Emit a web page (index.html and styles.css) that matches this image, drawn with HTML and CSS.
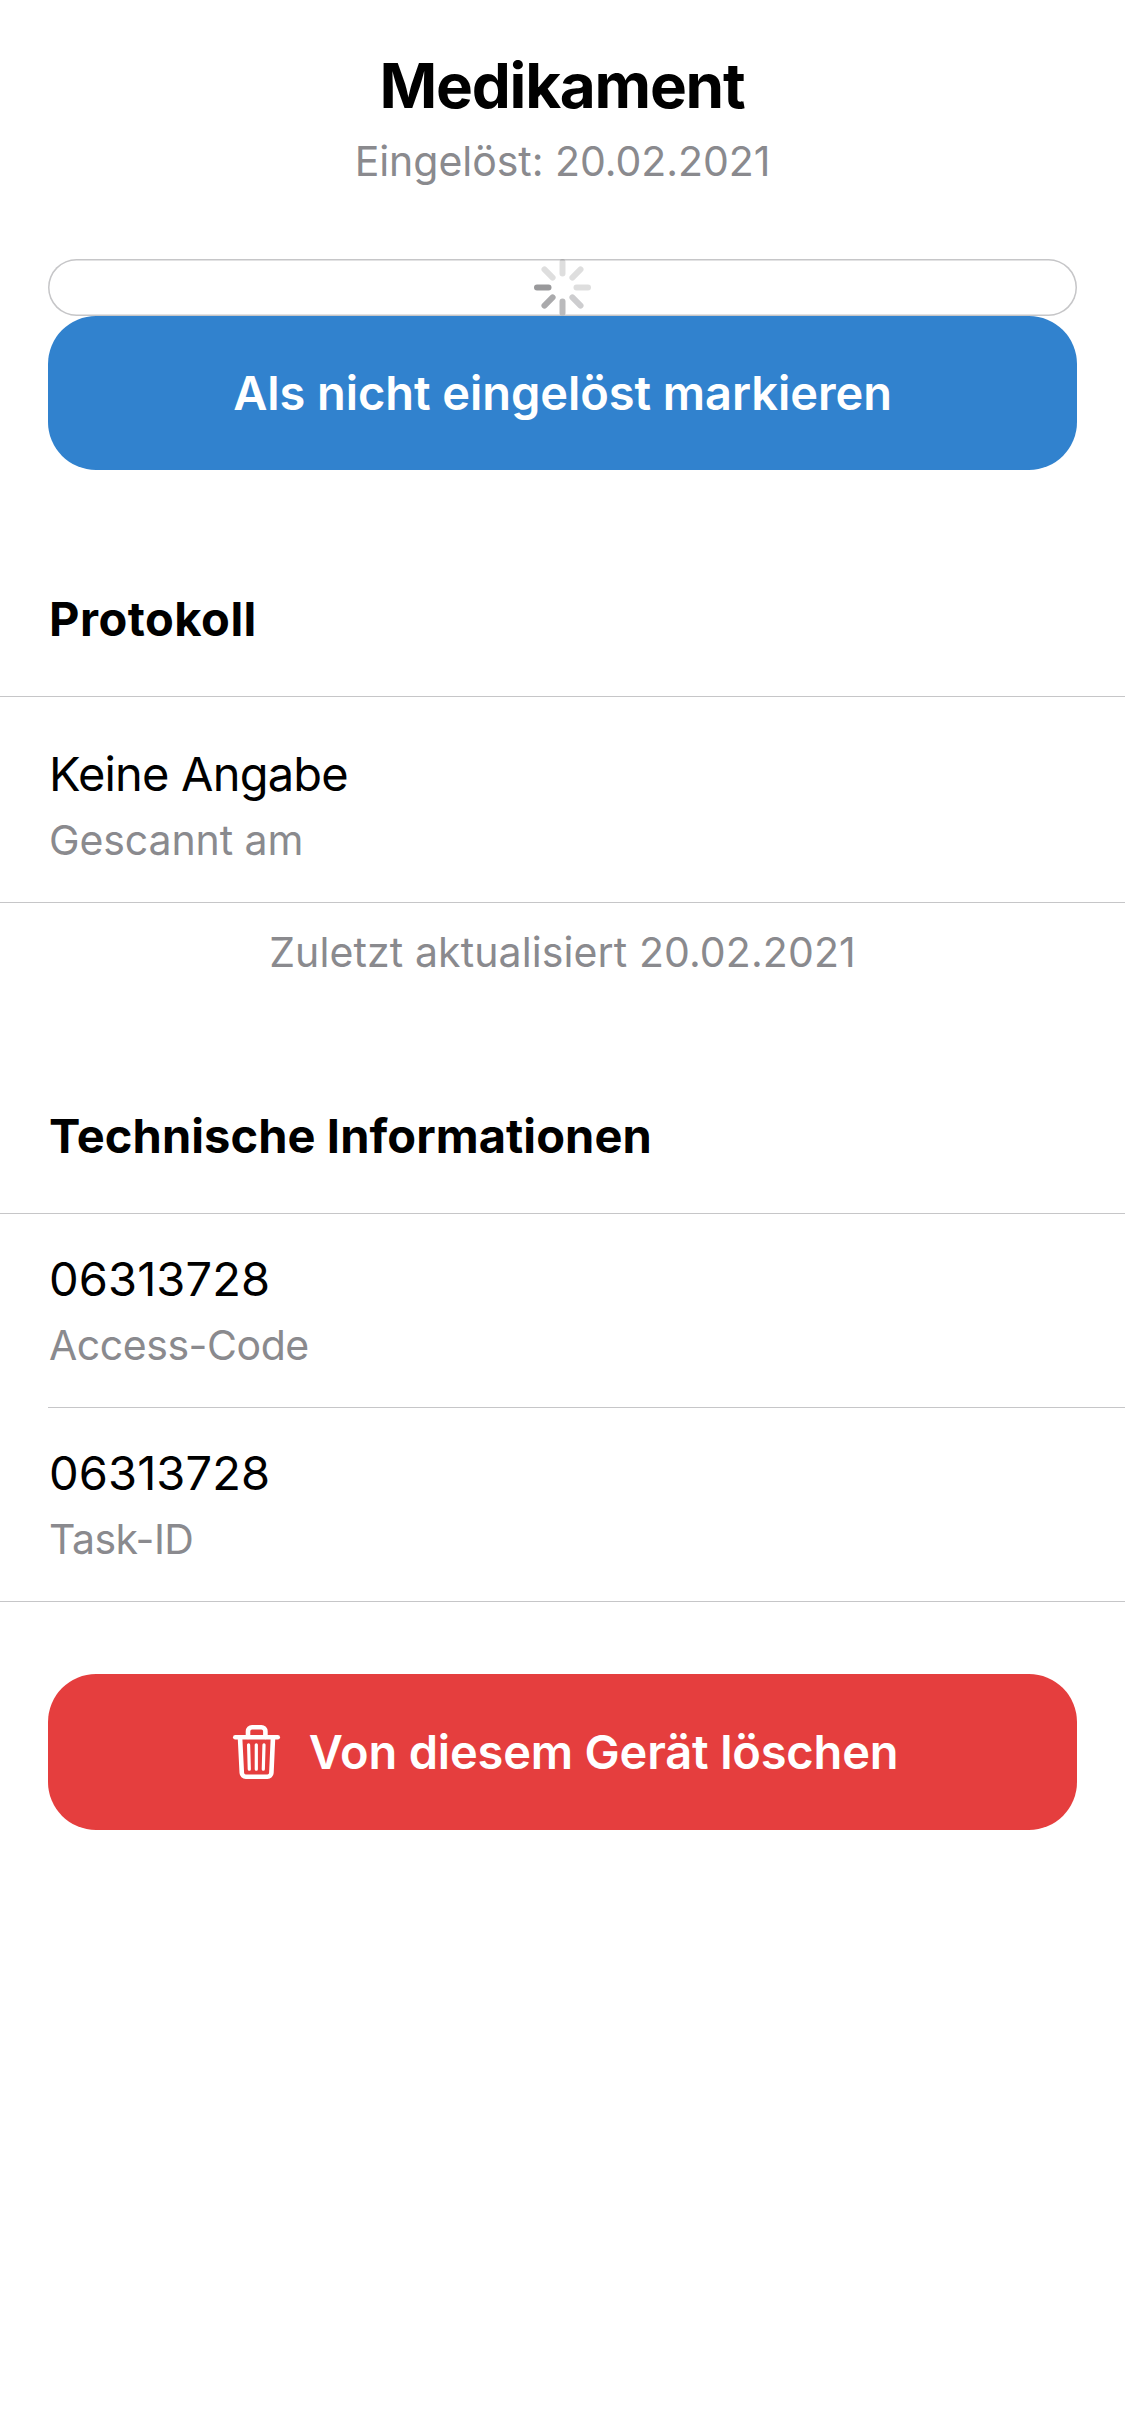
FILE: index.html
```html
<!DOCTYPE html>
<html lang="de">
<head>
  <meta charset="utf-8">
  <title>Medikament</title>
  <link rel="stylesheet" href="styles.css">
</head>
<body>
  <header class="header">
    <h1 class="title">Medikament</h1>
    <p class="subtitle">Eingelöst: 20.02.2021</p>
  </header>

  <div class="loading">
    <svg class="spinner" width="57" height="57" viewBox="-28.5 -28.5 57 57" fill="none" stroke="#000" stroke-width="6" stroke-linecap="round">
      <path d="M0-14V-25.5" stroke-opacity=".13"/>
      <path d="M0-14V-25.5" stroke-opacity=".13" transform="rotate(45)"/>
      <path d="M0-14V-25.5" stroke-opacity=".13" transform="rotate(90)"/>
      <path d="M0-14V-25.5" stroke="#cdcdcf" transform="rotate(135)"/>
      <path d="M0-14V-25.5" stroke="#bababc" transform="rotate(180)"/>
      <path d="M0-14V-25.5" stroke="#aaaaac" transform="rotate(225)"/>
      <path d="M0-14V-25.5" stroke="#99999b" transform="rotate(270)"/>
      <path d="M0-14V-25.5" stroke-opacity=".13" transform="rotate(315)"/>
    </svg>
  </div>
  <button class="button button-primary"><span class="label-redeem">Als nicht eingelöst markieren</span></button>

  <section class="section section-protocol">
    <h2 class="heading heading-protocol">Protokoll</h2>
    <div class="list">
      <div class="row row-tall">
        <div class="value value-text">Keine Angabe</div>
        <div class="caption">Gescannt am</div>
      </div>
    </div>
    <p class="footnote">Zuletzt aktualisiert 20.02.2021</p>
  </section>

  <section class="section section-technical">
    <h2 class="heading">Technische Informationen</h2>
    <div class="list">
      <div class="row">
        <div class="value">06313728</div>
        <div class="caption caption-code">Access-Code</div>
      </div>
      <div class="row">
        <div class="value">06313728</div>
        <div class="caption caption-task">Task-ID</div>
      </div>
    </div>
  </section>

  <button class="button button-danger">
    <svg width="58" height="60" viewBox="0 0 58 60" fill="none" stroke="#fff" stroke-width="4.6" stroke-linecap="round" stroke-linejoin="round">
      <path d="M8.3 15.3H50.7"/>
      <path d="M21 15V9.3a4 4 0 0 1 4-4h9.4a4 4 0 0 1 4 4V15"/>
      <path d="M13 15.3L14.8 50.9a4 4 0 0 0 4 3.8H40.4a4 4 0 0 0 4-3.8L46 15.3"/>
      <path d="M21.6 22.8L22.3 47.2M29.3 22.8V47.2M37 22.8L36.3 47.2" stroke-width="3.2"/>
    </svg>
    <span class="label-delete">Von diesem Gerät löschen</span>
  </button>
</body>
</html>
```
FILE: styles.css
```css
* {
  box-sizing: border-box;
}

body {
  margin: 0;
  min-height: 2436px;
  background: #fff;
  color: #000;
  font-family: Inter, "Liberation Sans", sans-serif;
}

h1,
h2,
p {
  margin: 0;
}

.header {
  padding-top: 48px;
  text-align: center;
}

.title {
  padding-right: 1px;
  font-size: 62px;
  font-weight: 700;
  line-height: 76px;
  letter-spacing: -1.25px;
}

.subtitle {
  margin-top: 12px;
  color: #8a8a8e;
  font-size: 41px;
  line-height: 50px;
  letter-spacing: -0.04px;
}

.loading {
  display: flex;
  align-items: center;
  justify-content: center;
  height: 57px;
  margin: 73px 48px 0;
  border-radius: 28.5px;
  box-shadow: inset 0 0 0 1.5px #c6c6c8;
}

.spinner {
  display: block;
}

.button {
  display: flex;
  align-items: center;
  justify-content: center;
  gap: 24px;
  width: 1029px;
  margin: 0 48px;
  padding: 0;
  border: 0;
  border-radius: 48px;
  color: #fff;
  font: 600 47px/60px Inter, "Liberation Sans", sans-serif;
}

.button-primary {
  height: 154px;
  background: #3182ce;
}

.button-danger {
  height: 156px;
  margin-top: 72px;
  background: #e53e3e;
}

.label-redeem {
  letter-spacing: -0.07px;
}

.label-delete {
  letter-spacing: -0.18px;
}

.section-protocol {
  padding-top: 119px;
}

.section-technical {
  padding-top: 129px;
}

.heading {
  padding: 0 48px 47px 49px;
  font-size: 47px;
  font-weight: 700;
  line-height: 60px;
  letter-spacing: 0.08px;
}

.heading-protocol {
  letter-spacing: 0.5px;
}

.list {
  border-top: 1px solid #c6c6c8;
  border-bottom: 1px solid #c6c6c8;
}

.row {
  margin-left: 48px;
  padding: 35px 0 37px 1px;
}

.row + .row {
  border-top: 1px solid #c6c6c8;
}

.row-tall {
  padding-top: 47px;
}

.value {
  font-size: 47px;
  line-height: 60px;
  letter-spacing: 0.1px;
}

.value-text {
  letter-spacing: -0.8px;
}

.caption {
  margin-top: 11px;
  color: #8a8a8e;
  font-size: 41px;
  line-height: 50px;
  letter-spacing: -0.1px;
}

.caption-code {
  letter-spacing: -0.45px;
}

.caption-task {
  letter-spacing: -0.55px;
}

.footnote {
  padding-top: 24px;
  color: #8a8a8e;
  font-size: 41px;
  line-height: 50px;
  letter-spacing: 0.11px;
  text-align: center;
}
```
